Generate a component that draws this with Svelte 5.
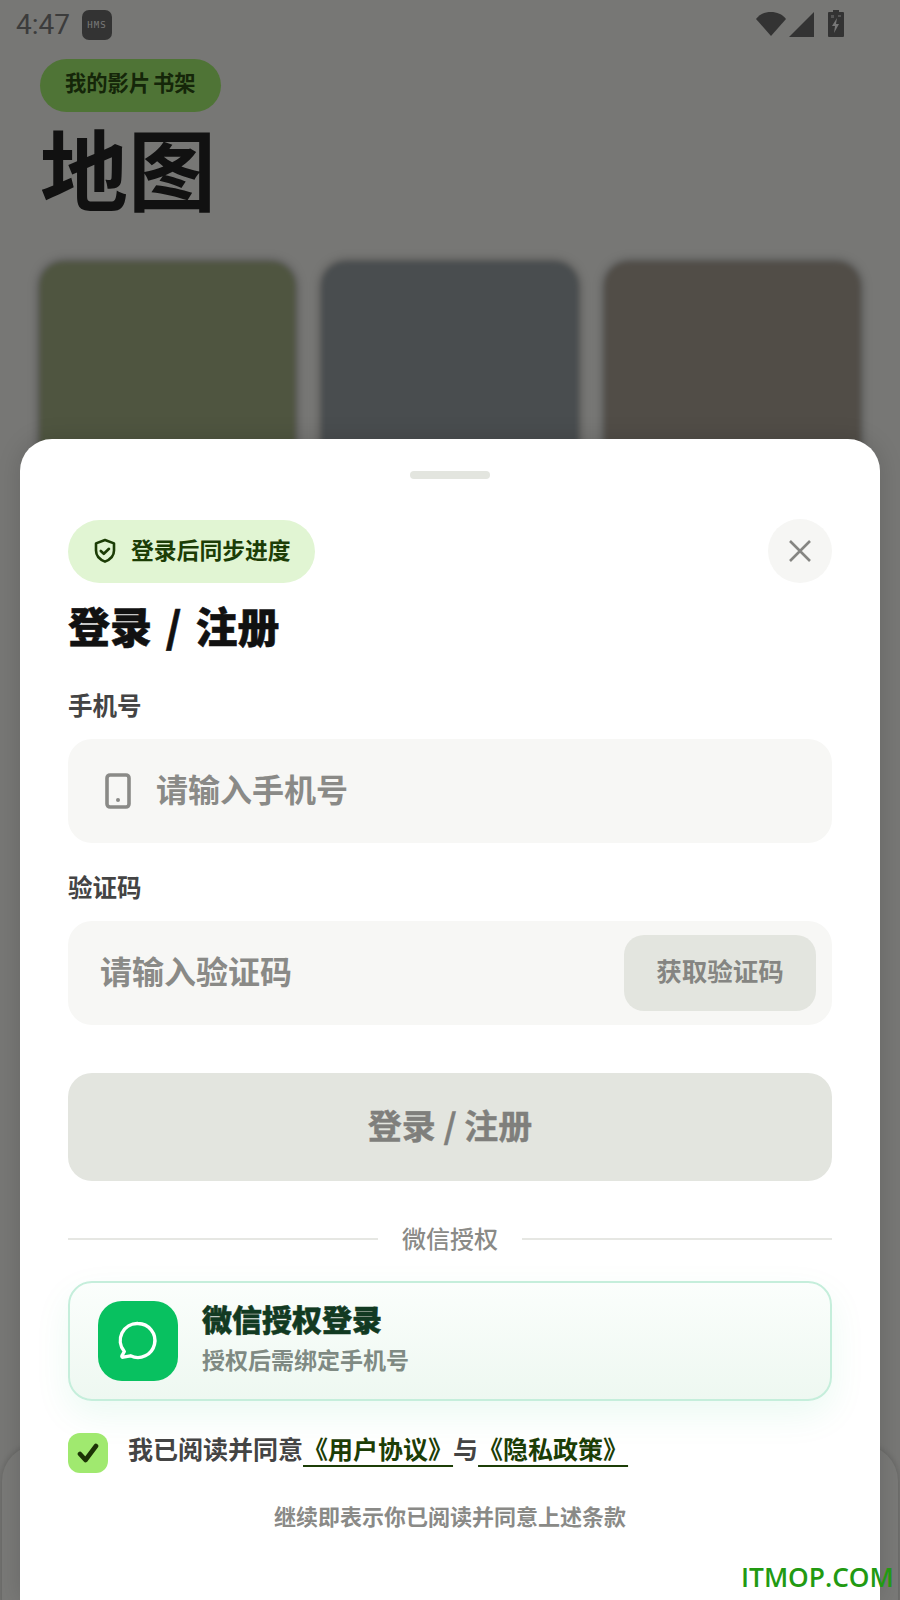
<script>
	const covers = ['green', 'blue', 'brown'];
</script>

<div class="screen">
	<div class="page">
		<div class="status">
			<span class="time">4:47</span>
			<span class="hms">HMS</span>
			<span class="status-icons">
				<svg width="30" height="26" viewBox="0 0 30 26"><path d="M0 8C4 3 9 1 15 1s11 2 15 7L15 25z" fill="#666" /></svg>
				<svg width="25" height="25" viewBox="0 0 25 25"><path d="M25 0v25H0z" fill="#666" /></svg>
				<svg class="battery" width="16" height="27" viewBox="0 0 16 27">
					<path d="M5 0h6v2h4a1 1 0 0 1 1 1v23a1 1 0 0 1-1 1H1a1 1 0 0 1-1-1V3a1 1 0 0 1 1-1h4z" fill="#666" />
					<path d="M9 8 4 16h3l-1 7 5-9H8z" fill="#eee" />
					<path d="M3 5h3v3H3zM10 5h3v2h-3z" fill="#aaa" />
				</svg>
			</span>
		</div>
		<div class="shelf">我的影片 书架</div>
		<h1>地图</h1>
		<div class="covers">
			{#each covers as c}
				<div class="cover {c}"></div>
			{/each}
		</div>
		<div class="back-panel"></div>
	</div>

	<div class="scrim"></div>

	<section class="sheet">
		<div class="handle"></div>
		<div class="head">
			<div class="sync">
				<svg width="24" height="26" viewBox="0 0 24 26" fill="none" stroke="#1c3d06" stroke-width="2.6" stroke-linejoin="round" stroke-linecap="round">
					<path d="M12 2l9 3.4v7.2c0 5.4-3.6 9-9 11-5.4-2-9-5.6-9-11V5.400z" />
					<path d="M7.800 13l3 2.800 5.200-5" />
				</svg>
				<span>登录后同步进度</span>
			</div>
			<button class="close" aria-label="关闭">
				<svg width="24" height="24" viewBox="0 0 24 24" fill="none" stroke="#858582" stroke-width="2.600"><path d="M2 2l20 20M22 2L2 22" /></svg>
			</button>
		</div>
		<h2>登录 / 注册</h2>

		<div class="label first">手机号</div>
		<div class="field">
			<svg class="phone" width="26" height="36" viewBox="0 0 26 36" fill="none" stroke="#8a8a87" stroke-width="3.600">
				<rect x="2" y="2" width="22" height="32" rx="3" />
				<circle cx="13" cy="27" r="2" fill="#8a8a87" stroke="none" />
			</svg>
			<span class="placeholder">请输入手机号</span>
		</div>

		<div class="label">验证码</div>
		<div class="field code">
			<span class="placeholder">请输入验证码</span>
			<button class="get-code">获取验证码</button>
		</div>

		<button class="submit">登录 / 注册</button>

		<div class="divider"><span>微信授权</span></div>

		<div class="wechat">
			<div class="wechat-icon">
				<svg width="42" height="42" viewBox="0 0 42 42" fill="none" stroke="#fff" stroke-width="3.400" stroke-linejoin="round">
					<path d="M21 3.500a17 17 0 1 1-7.500 32.300l-7.300 1.400c-1 .2-1.700-.7-1.200-1.500l2.300-4.200A17 17 0 0 1 21 3.500z" />
				</svg>
			</div>
			<div class="wechat-text">
				<div class="wechat-title">微信授权登录</div>
				<div class="wechat-sub">授权后需绑定手机号</div>
			</div>
		</div>

		<div class="agree">
			<span class="check">
				<svg width="22" height="20" viewBox="0 0 22 20" fill="none" stroke="#1c3306" stroke-width="4.600" stroke-linecap="round" stroke-linejoin="round"><path d="M3 11l5.500 6L19 3" /></svg>
			</span>
			<p>我已阅读并同意<a href="#terms">《用户协议》</a>与<a href="#privacy">《隐私政策》</a></p>
		</div>

		<div class="foot">继续即表示你已阅读并同意上述条款</div>
	</section>

	<div class="watermark">ITMOP.COM</div>
</div>

<style>
	:global(body) {
		margin: 0;
	}

	.screen {
		position: relative;
		width: 900px;
		height: 1600px;
		overflow: hidden;
		font-family: 'Noto Sans CJK SC', 'Noto Sans', sans-serif;
	}

	.page {
		height: 1600px;
		background: #eeeeea;
		padding: 0 40px;
		box-sizing: border-box;
		position: relative;
	}

	.status {
		display: flex;
		align-items: center;
		height: 48px;
		margin: 0 -24px;
		padding-top: 1px;
	}
	.time {
		font-family: Roboto, sans-serif;
		font-size: 28px;
		color: #787878;
		line-height: 48px;
	}
	.hms {
		margin-left: 12px;
		width: 30px;
		height: 30px;
		border-radius: 7px;
		background: #666;
		color: #f0f0f0;
		font-family: 'DejaVu Sans Mono', monospace;
		font-size: 9px;
		letter-spacing: 1px;
		display: flex;
		align-items: center;
		justify-content: center;
	}
	.status-icons {
		margin-left: auto;
		margin-right: 40px;
		margin-bottom: 4px;
		display: flex;
		align-items: flex-end;
		height: 27px;
	}
	.status-icons svg {
		display: block;
		margin-left: 3px;
	}
	.status-icons .battery {
		margin-left: 14px;
	}

	.shelf {
		display: inline-block;
		margin-top: 10px;
		height: 53px;
		line-height: 45px;
		padding: 0 25px;
		border-radius: 27px;
		background: #9fe86c;
		color: #2a4c12;
		font-size: 21.300px;
		font-weight: 700;
		word-spacing: -2px;
	}

	h1 {
		margin: -2px 0 0;
		font-size: 88px;
		line-height: 112px;
		font-weight: 700;
		color: #222;
	}

	.covers {
		display: flex;
		gap: 27px;
		margin-top: 40px;
	}
	.cover {
		flex: 1;
		height: 400px;
		border-radius: 24px;
		filter: blur(2.500px);
		box-shadow: 0 0 10px rgba(0, 0, 0, 0.5);
	}
	.green {
		background: #9eaa80;
	}
	.blue {
		background: #929a9e;
	}
	.brown {
		background: #a29a8e;
	}

	.back-panel {
		position: absolute;
		left: 2px;
		right: 2px;
		top: 1445px;
		height: 200px;
		border-radius: 36px;
		background: #f2f2ee;
		box-shadow: 0 0 6px rgba(0, 0, 0, 0.2);
	}

	.scrim {
		position: absolute;
		inset: 0;
		background: rgba(0, 0, 0, 0.5);
	}

	.sheet {
		position: absolute;
		left: 20px;
		right: 20px;
		top: 439px;
		bottom: 0;
		background: #fff;
		border-radius: 32px 32px 0 0;
		padding: 32px 48px 0;
		box-shadow: 0 0 24px rgba(0, 0, 0, 0.14);
	}

	.handle {
		width: 80px;
		height: 8px;
		margin: 0 auto;
		border-radius: 4px;
		background: #e3e5df;
	}

	.head {
		display: flex;
		justify-content: space-between;
		align-items: center;
		margin-top: 40px;
	}
	.sync {
		display: flex;
		align-items: center;
		gap: 14px;
		height: 63px;
		padding: 0 24px 0 25px;
		border-radius: 32px;
		background: #e1f5d3;
		color: #1c3d06;
		font-size: 22.800px;
		font-weight: 700;
	}
	.sync span {
		padding-bottom: 4px;
	}
	.close {
		width: 64px;
		height: 64px;
		padding: 0;
		border: 0;
		border-radius: 50%;
		background: #f6f6f4;
		display: flex;
		align-items: center;
		justify-content: center;
	}

	h2 {
		margin: 13px 0 0;
		font-size: 42px;
		line-height: 58px;
		font-weight: 900;
		color: #111;
		word-spacing: 4px;
		-webkit-text-stroke: 0.5px #111;
	}

	.label {
		margin-top: 26px;
		font-size: 24.500px;
		line-height: 36px;
		font-weight: 700;
		color: #444;
		margin-bottom: 16px;
	}
	.label.first {
		margin-top: 33px;
	}

	.field {
		display: flex;
		align-items: center;
		height: 104px;
		border-radius: 24px;
		background: #f7f7f5;
		padding: 0 16px 0 37px;
		box-sizing: border-box;
	}
	.field.code {
		padding-left: 32px;
		justify-content: space-between;
	}
	.phone {
		margin-right: 25px;
		flex: none;
	}
	.placeholder {
		font-size: 32px;
		font-weight: 700;
		color: #8a8a87;
		padding-bottom: 6px;
	}
	.get-code {
		width: 192px;
		height: 76px;
		border: 0;
		padding: 0 0 8px;
		border-radius: 20px;
		background: #e3e5df;
		color: #858582;
		font: inherit;
		font-size: 25.500px;
		font-weight: 700;
	}

	.submit {
		display: block;
		width: 100%;
		height: 108px;
		margin-top: 48px;
		border: 0;
		padding: 0 0 6px;
		border-radius: 24px;
		background: #e3e5df;
		color: #7f7f7c;
		font: inherit;
		font-size: 34px;
		font-weight: 700;
		-webkit-text-stroke: 0.4px #7f7f7c;
	}

	.divider {
		display: flex;
		align-items: center;
		gap: 24px;
		margin-top: 40px;
		height: 36px;
		font-size: 24px;
		font-weight: 500;
		color: #8a8a87;
	}
	.divider span {
		padding-bottom: 4px;
	}
	.divider::before,
	.divider::after {
		content: '';
		flex: 1;
		height: 1.500px;
		background: #e6e7e3;
	}

	.wechat {
		display: flex;
		align-items: center;
		gap: 24px;
		height: 120px;
		margin-top: 24px;
		padding: 0 28px;
		box-sizing: border-box;
		border: 2px solid #c5eedb;
		border-radius: 24px;
		background: linear-gradient(180deg, #fbfefc, #eef8f1);
		box-shadow: 0 14px 36px rgba(7, 193, 96, 0.08);
	}
	.wechat-icon {
		width: 80px;
		height: 80px;
		flex: none;
		border-radius: 24px;
		background: #08c160;
		display: flex;
		align-items: center;
		justify-content: center;
	}
	.wechat-title {
		font-size: 30px;
		line-height: 40px;
		font-weight: 900;
		color: #123a22;
		margin-top: -9px;
		-webkit-text-stroke: 0.5px #123a22;
	}
	.wechat-sub {
		font-size: 23px;
		line-height: 32px;
		font-weight: 700;
		color: #7f8a83;
		margin-top: 5px;
	}

	.agree {
		display: flex;
		align-items: center;
		gap: 20px;
		margin-top: 32px;
		height: 40px;
	}
	.check {
		width: 40px;
		height: 40px;
		flex: none;
		border-radius: 12px;
		background: #a0e96f;
		display: flex;
		align-items: center;
		justify-content: center;
	}
	.agree p {
		margin: -10px 0 0;
		font-size: 25px;
		font-weight: 700;
		color: #444;
		white-space: nowrap;
	}
	.agree a {
		color: #1c3d06;
		text-decoration: underline 2px #1c3d06;
		text-underline-offset: 6px;
		text-decoration-skip-ink: none;
	}

	.foot {
		margin-top: 26px;
		text-align: center;
		font-size: 22px;
		line-height: 32px;
		font-weight: 700;
		color: #8a8a87;
	}

	.watermark {
		position: absolute;
		left: 741px;
		top: 1558px;
		font-family: 'Open Sans', sans-serif;
		font-size: 26.300px;
		font-weight: 600;
		line-height: 38px;
		color: #229a12;
		white-space: nowrap;
	}
</style>
